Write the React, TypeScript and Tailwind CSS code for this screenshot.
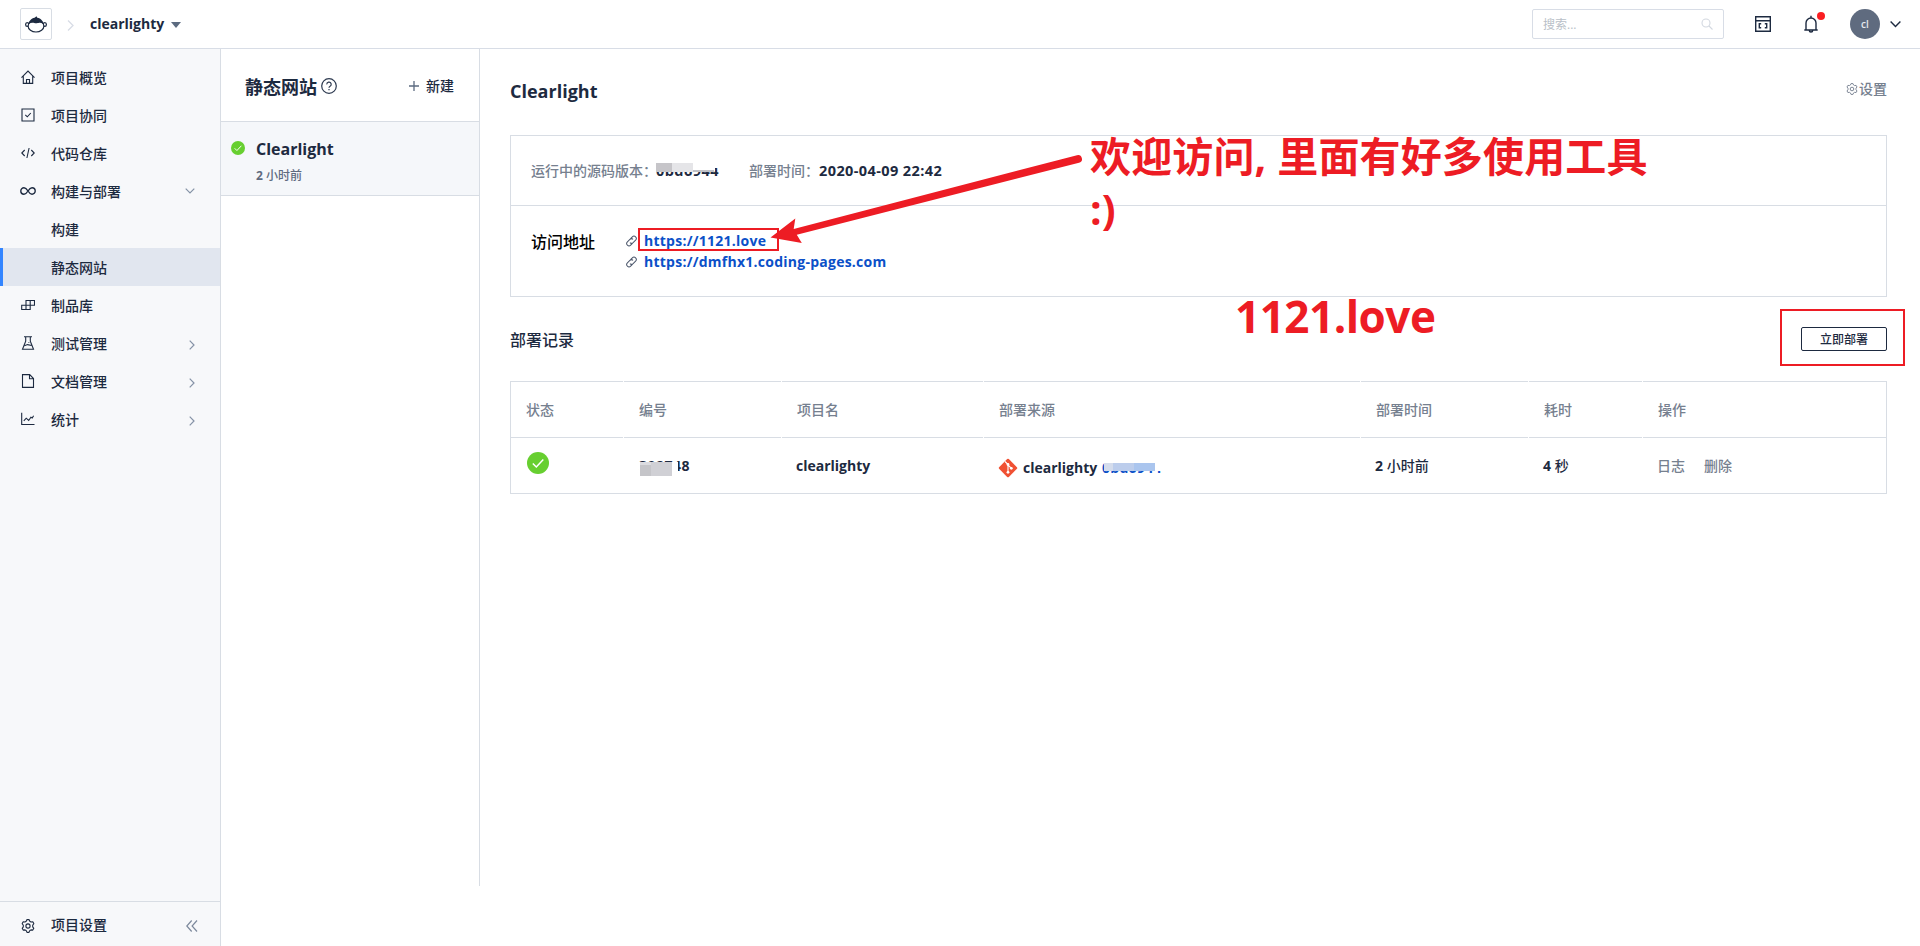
import React from "react";

type IconProps = { className?: string; children: React.ReactNode; size?: number; sw?: number };

function Svg({ className = "", children, size = 14, sw = 1.1 }: IconProps) {
  return (
    <svg
      width={size}
      height={size}
      viewBox="0 0 14 14"
      fill="none"
      stroke="currentColor"
      strokeWidth={sw}
      className={"shrink-0 " + className}
    >
      {children}
    </svg>
  );
}

const gear = (
  <>
    <path d="M5.2 2.300 6 .600h2l.8 1.700 1.200.7 1.800-.2 1 1.800L11.700 6.200v1.600l1.100 1.500-1 1.800-1.800-.2-1.200.7L8 13.400H6l-.8-1.800-1.200-.7-1.800.2-1-1.800 1.100-1.500V6.200L1.200 4.600l1-1.800 1.800.2z" strokeLinejoin="round" />
    <circle cx="7" cy="7" r="2.100" />
  </>
);

const icons: Record<string, React.ReactNode> = {
  home: (
    <>
      <path d="M.5 7.600 7 1l6.500 6.600M2.300 6v7.400h9.400V6" />
      <path d="M5.500 13.300V9.500h3v3.800" />
    </>
  ),
  check: (
    <>
      <path d="M1 1h12v12H1z" />
      <path d="m4.300 6.800 2 2 3.500-3.800" />
    </>
  ),
  code: <path d="M3.700 4 .8 7l2.900 3M10.300 4l2.900 3-2.900 3M8.100 2 5.900 12" />,
  blocks: <path d="M5 2.500h8.500v4.700H5zM9.200 2.500v9M.7 7.200h8.500v4.300H.7zM5 4v7.500" />,
  flask: (
    <>
      <path d="M3 .8h8M4.700.8v4.400L1.500 13.200h11L9.300 5.200V.8" />
      <path d="m3.200 9.800 3.400-1.200 4.200.9M7.500 6.500h.8" />
    </>
  ),
  doc: <path d="M1.500.600h7.200l3.800 3.900v8.900h-11zM8.500.800v4h4" />,
  chart: <path d="M.7.800v11.700h12.800M2.800 8.800l2.400-2.600 2.500 2.300 2.200-3.200 1.300.7 1.400-2.300" />,
  gear,
};

function LoopIcon() {
  return (
    <svg width="16" height="8" viewBox="0 0 16 8" fill="none" stroke="currentColor" strokeWidth="1.4" className="-mx-px shrink-0">
      <path d="M8 4C6.600 1.700 5.600.8 4 .8a3.200 3.200 0 0 0 0 6.400C5.600 7.200 6.600 6.300 8 4s2.400-3.200 4-3.200a3.200 3.200 0 0 1 0 6.400C10.400 7.200 9.400 6.300 8 4z" />
    </svg>
  );
}

type Item = { label: string; icon?: string; arrow?: "down" | "right"; active?: boolean };

const menu: Item[] = [
  { label: "项目概览", icon: "home" },
  { label: "项目协同", icon: "check" },
  { label: "代码仓库", icon: "code" },
  { label: "构建与部署", icon: "loop", arrow: "down" },
  { label: "构建" },
  { label: "静态网站", active: true },
  { label: "制品库", icon: "blocks" },
  { label: "测试管理", icon: "flask", arrow: "right" },
  { label: "文档管理", icon: "doc", arrow: "right" },
  { label: "统计", icon: "chart", arrow: "right" },
];

function MenuRow({ item }: { item: Item }) {
  return (
    <div
      className={
        "flex h-[38px] items-center border-l-[3px] pr-6 pl-[18px] " +
        (item.active ? "border-[#3385ff] bg-[#e1e6ef]" : "border-transparent")
      }
    >
      <span className="flex w-[14px] justify-center">
        {item.icon === "loop" ? <LoopIcon /> : item.icon ? <Svg>{icons[item.icon]}</Svg> : null}
      </span>
      <span className="ml-4 flex-1 pt-0.5">{item.label}</span>
      {item.arrow === "down" && (
        <svg width="10" height="6" viewBox="0 0 10 6" fill="none" stroke="#8592a6" strokeWidth="1.200" className="mr-px">
          <path d="m.7.700 4.300 4.300L9.300.700" />
        </svg>
      )}
      {item.arrow === "right" && (
        <svg width="6" height="10" viewBox="0 0 6 10" fill="none" stroke="#8592a6" strokeWidth="1.200" className="mt-[3px] mr-px">
          <path d="m.7.700 4.300 4.300L.7 9.300" />
        </svg>
      )}
    </div>
  );
}

function GreenCheck({ size }: { size: number }) {
  return (
    <svg width={size} height={size} viewBox="0 0 22 22" className="shrink-0">
      <circle cx="11" cy="11" r="11" fill="#67cf30" />
      <path d="m5.800 11.500 3.500 3.500 7-7.500" fill="none" stroke="#fff" strokeWidth="1.500" />
    </svg>
  );
}

function LinkIcon() {
  return (
    <svg width="11" height="12" viewBox="0 0 11 12" fill="none" stroke="#4b566b" strokeWidth="1" className="shrink-0">
      <g transform="rotate(-45 5.500 6)">
        <path d="M4.500 8.300H2a2.300 2.300 0 0 1 0-4.600h3.500A2.300 2.300 0 0 1 7.700 6" />
        <path d="M6.500 3.700H9a2.300 2.300 0 0 1 0 4.600H5.500A2.300 2.300 0 0 1 3.300 6" />
      </g>
    </svg>
  );
}

function Logo() {
  return (
    <div className="flex size-8 items-center justify-center rounded-[2px] border border-[#d8dde4]">
      <svg width="22" height="17" viewBox="0 0 22 17">
        <ellipse cx="2.200" cy="8.500" rx="1.600" ry="1.900" fill="#fff" stroke="#1d2a40" strokeWidth="1.200" />
        <ellipse cx="19.800" cy="8.500" rx="1.600" ry="1.900" fill="#fff" stroke="#1d2a40" strokeWidth="1.200" />
        <ellipse cx="11" cy="10" rx="7.900" ry="6" fill="#fff" stroke="#1d2a40" strokeWidth="1.200" />
        <path d="M3 9.200C3.600 5 6.400 2.300 9.600 1.700L11.500.200l.8 1.500C15.900 2.300 18.400 5 19 9.200c-1.300-2-2.800-2.700-4.600-2.500-1.400.2-2 .5-3.400.5s-2-.3-3.400-.5C5.800 6.500 4.300 7.200 3 9.200z" fill="#1d2a40" />
      </svg>
    </div>
  );
}

function Header() {
  return (
    <header className="flex h-[49px] shrink-0 items-center border-b border-[#d8dde6] bg-white pr-[19px] pl-5">
      <Logo />
      <svg width="7" height="11" viewBox="0 0 7 11" fill="none" stroke="#d8dde6" strokeWidth="1.300" className="mt-0.5 ml-[15px]">
        <path d="m1 .500 5 5-5 5" />
      </svg>
      <span className="mb-px ml-4 w-[74px] font-bold whitespace-nowrap">clearlighty</span>
      <svg width="10" height="6" viewBox="0 0 10 6" className="mt-px ml-[7px]">
        <path d="M0 0h10L5 6z" fill="#5c6b80" />
      </svg>
      <div className="ml-auto flex h-[30px] w-48 items-center justify-between rounded-[2px] border border-[#d8dde6] px-[10px] text-[12px] font-normal text-[#b9bfc8]">
        <span className="mt-px">搜索...</span>
        <svg width="12" height="12" viewBox="0 0 12 12" fill="none" stroke="#d3d8e0" strokeWidth="1.100">
          <circle cx="5" cy="5" r="4" />
          <path d="m8 8 3.500 3.500" />
        </svg>
      </div>
      <svg width="16" height="16" viewBox="0 0 16 16" fill="none" stroke="#1d2a40" strokeWidth="1.400" className="ml-[31px]">
        <path d="M.7.700h14.600v14.600H.7zM.7 4.700h14.600M6.200 7.700H4.300v4h1.900M9.800 7.700h1.900v4H9.800" />
      </svg>
      <div className="relative ml-[33px]">
        <svg width="14" height="18" viewBox="0 0 14 18" fill="none" stroke="#1d2a40" strokeWidth="1.400">
          <path d="M.300 15h13.400M2 15V8a5 5 0 0 1 10 0v7M7 3V.800M5.300 15.500a1.700 1.500 0 0 0 3.400 0" />
        </svg>
        <span className="absolute -top-[3px] left-[13px] size-2 rounded-full bg-[#fa1e22]" />
      </div>
      <span className="ml-[32px] flex size-[30px] items-center justify-center rounded-full bg-[#5f6b7f] text-[10px] font-semibold text-[#e4e7ec]">cl</span>
      <svg width="11" height="7" viewBox="0 0 11 7" fill="none" stroke="#1d2a40" strokeWidth="1.400" className="ml-[10px]">
        <path d="m.6.600 4.900 5 4.900-5" />
      </svg>
    </header>
  );
}

function Sidebar() {
  return (
    <aside className="flex w-[221px] shrink-0 flex-col border-r border-[#d8dde4] bg-[#f7f8fa] pt-[9px]">
      {menu.map((m) => (
        <MenuRow key={m.label} item={m} />
      ))}
      <div className="mt-auto flex h-[45px] items-center border-t border-[#d8dde4] pr-[22px] pl-[21px]">
        <Svg className="mt-[3px]">{icons.gear}</Svg>
        <span className="ml-4 flex-1 pt-0.5">项目设置</span>
        <svg width="12" height="12" viewBox="0 0 12 12" fill="none" stroke="#7d899c" strokeWidth="1.200" className="mt-[3px]">
          <path d="M5.700.500.800 6l4.900 5.500M11 .500 6.100 6l4.900 5.500" />
        </svg>
      </div>
    </aside>
  );
}

function SiteList() {
  return (
    <section className="h-[837px] w-[259px] shrink-0 border-r border-[#d8dde4]">
      <div className="flex h-[73px] items-center border-b border-[#d8dde4] pt-px pr-[25px] pl-6">
        <h2 className="mt-0.5 text-[18px] font-bold">静态网站</h2>
        <svg width="16" height="16" viewBox="0 0 16 16" fill="none" stroke="#2d3a50" strokeWidth="1.200" className="ml-1">
          <circle cx="8" cy="8" r="7.300" />
          <path d="M5.800 6.400a2.200 2.200 0 1 1 3.300 1.800c-.8.500-1.100.8-1.100 1.600M8 11v1.300" />
        </svg>
        <svg width="10" height="10" viewBox="0 0 10 10" stroke="#5c6b80" strokeWidth="1.300" className="ml-auto">
          <path d="M5 0v10M0 5h10" />
        </svg>
        <span className="ml-[7px] pt-px">新建</span>
      </div>
      <div className="flex h-[74px] border-b border-[#d8dde4] bg-[#f5f7fa] pt-[13px] pl-[10px]">
        <div className="pt-1.5">
          <GreenCheck size={14} />
        </div>
        <div className="ml-[11px]">
          <div className="text-[16px] leading-7 font-bold">Clearlight</div>
          <div className="pt-px text-[12px] leading-6 text-[#5f6b7f]">
            <b>2</b> 小时前
          </div>
        </div>
      </div>
    </section>
  );
}

function InfoCard() {
  return (
    <div className="mt-[23px] h-[162px] border border-[#d8dde4]">
      <div className="flex h-[70px] items-center border-b border-[#d8dde4] pl-5 text-[#76808f]">
        <span className="w-[125px] whitespace-nowrap">运行中的源码版本：</span>
        <span className="relative w-[64px] text-[14.500px] font-bold tracking-[0.450px] text-[#1d2a40]">
          0bd6944
          <span className="absolute top-0 left-0 h-[10px] w-[59px] bg-white" />
          <span className="absolute top-0 left-[59px] h-[7px] w-[6px] bg-white" />
          <span className="absolute top-[2px] left-0 h-[9px] w-4 bg-[#c6c5c9]" />
          <span className="absolute top-[2px] left-4 h-[9px] w-[21px] bg-[#e5e5e8]" />
          <span className="absolute top-[9px] left-[37px] h-[2px] w-[21px] bg-[#c0c2c8]" />
        </span>
        <span className="ml-[29px] w-[70px] whitespace-nowrap">部署时间：</span>
        <span className="text-[14.500px] font-bold tracking-[0.400px] whitespace-nowrap text-[#1d2a40]">2020-04-09 22:42</span>
      </div>
      <div className="flex pt-[24px] pl-5">
        <span className="w-[95px] pt-px text-[16px] leading-[22px] text-black">访问地址</span>
        <div className="flex flex-col font-bold text-[#0b50c8]">
          {["https://1121.love", "https://dmfhx1.coding-pages.com"].map((u) => (
            <a key={u} className="flex h-[21px] items-center">
              <LinkIcon />
              <span className="ml-[7px] tracking-[0.250px]">{u}</span>
            </a>
          ))}
        </div>
      </div>
    </div>
  );
}

function Rule() {
  return (
    <div className="grid grid-cols-[112px_157px_201px_376px_167px_113px_1fr] gap-x-px">
      {[0, 1, 2, 3, 4, 5, 6].map((i) => (
        <span key={i} className="h-px bg-[#d8dde4]" />
      ))}
    </div>
  );
}

function GitIcon() {
  return (
    <svg width="20" height="20" viewBox="0 0 20 20" className="shrink-0">
      <rect x="3.100" y="3.100" width="13.800" height="13.800" rx="1.200" transform="rotate(45 10 10)" fill="#f05133" />
      <path d="M7 3.500 10 6.500v8M10 7l3.200 3.200" stroke="#fff" strokeWidth="1.100" fill="none" />
      <circle cx="10" cy="6.500" r="1.400" fill="#fff" />
      <circle cx="10" cy="14.300" r="1.400" fill="#fff" />
      <circle cx="13.300" cy="10.300" r="1.400" fill="#fff" />
    </svg>
  );
}

function Table() {
  return (
    <div className="mt-[15px] border-x border-b border-[#d8dde4]">
      <Rule />
      <div className="grid grid-cols-[113px_158px_202px_377px_168px_114px_1fr] text-[#76808f]">
        {["状态", "编号", "项目名", "部署来源", "部署时间", "耗时", "操作"].map((h) => (
          <div key={h} className="flex h-[55px] items-center pl-[15px]">{h}</div>
        ))}
      </div>
      <Rule />
      <div className="grid h-[55px] grid-cols-[113px_158px_202px_377px_168px_114px_1fr] items-center">
        <div className="mb-[5px] pl-4">
          <GreenCheck size={22} />
        </div>
        <div className="pt-px pl-[15px] font-bold">
          <span className="relative inline-block w-[52px] tracking-[0.500px]">
            392748
            <span className="absolute top-[6px] left-0 h-3 w-[39px] bg-white" />
            <span className="absolute top-[6px] left-px h-[14px] w-[11px] bg-[#dcdce0]" />
            <span className="absolute top-[9px] left-px h-[11px] w-[11px] bg-[#c5c5c9]" />
            <span className="absolute top-[6px] left-3 h-[14px] w-[21px] bg-[#d0d0d5]" />
          </span>
        </div>
        <div className="pt-px pl-[14px] font-bold">clearlighty</div>
        <div className="flex items-center pt-[5px] pl-3.5 font-bold">
          <GitIcon />
          <span className="ml-[5px] w-[79px]">clearlighty</span>
          <span className="relative w-[62px] tracking-[0.300px] text-[#0b50c8]">
            0bd6944
            <span className="absolute top-0 left-[2px] h-[13px] w-[60px] bg-white" />
            <span className="absolute top-[5px] left-[2px] h-[8px] w-[9px] bg-[#d4dcec]" />
            <span className="absolute top-[5px] left-[11px] h-[8px] w-[21px] bg-[#bccdec]" />
            <span className="absolute top-[5px] left-[32px] h-[8px] w-[21px] bg-[#aac5ee]" />
          </span>
        </div>
        <div className="pt-px pl-[14px]">
          <b>2</b> 小时前
        </div>
        <div className="pt-px pl-[14px]">
          <b>4</b> 秒
        </div>
        <div className="flex gap-[19px] pt-px pl-[14px] text-[#76808f]">
          <span>日志</span>
          <span>删除</span>
        </div>
      </div>
    </div>
  );
}

function Annotations() {
  return (
    <div className="pointer-events-none absolute inset-0 font-bold text-[#ed1c24]">
      <div className="absolute top-[228px] left-[638px] h-[23px] w-[141px] border-2 border-[#ed1c24]" />
      <div className="absolute top-[309px] left-[1780px] h-[57px] w-[125px] border-2 border-[#ed1c24]" />
      <svg width="320" height="100" viewBox="765 150 320 100" className="absolute top-[150px] left-[765px]">
        <path d="M770.500 237.500 795.300 218.500 793.700 229 1077 155.200a3.900 3.900 0 0 1 2 7.600L796.800 234.800 801.800 243z" fill="#ed1c24" />
      </svg>
      <div className="absolute top-[130px] left-[1090px] text-[41px] leading-[53px] tracking-[0.150px] whitespace-nowrap">
        欢迎访问, 里面有好多使用工具
        <br />
        :)
      </div>
      <div className="absolute top-[286px] left-[1235px] text-[44px] leading-[60px] tracking-[-0.500px]">1121.love</div>
    </div>
  );
}

export default function App() {
  return (
    <div className="relative flex h-[946px] w-[1920px] flex-col overflow-hidden bg-white font-['Open_Sans','Noto_Sans_CJK_SC',sans-serif] text-[14px] leading-5 font-medium text-[#1d2a40]">
      <Header />
      <div className="flex min-h-0 flex-1">
        <Sidebar />
        <SiteList />
        <main className="flex-1 pt-[28px] pr-[33px] pl-[30px]">
          <div className="flex h-[35px] items-center justify-between">
            <h1 className="mb-2 text-[18px] font-bold">Clearlight</h1>
            <div className="mb-3 flex items-center text-[#76808f]">
              <Svg size={12} className="mr-[1.500px]">{icons.gear}</Svg>
              设置
            </div>
          </div>
          <InfoCard />
          <div className="mt-[15px] flex h-[54px] items-center justify-between">
            <h3 className="pt-px text-[16px]">部署记录</h3>
            <button className="h-6 w-[86px] rounded-[2px] border border-[#1d2a40] pt-px text-[12px]">立即部署</button>
          </div>
          <Table />
        </main>
      </div>
      <Annotations />
    </div>
  );
}
